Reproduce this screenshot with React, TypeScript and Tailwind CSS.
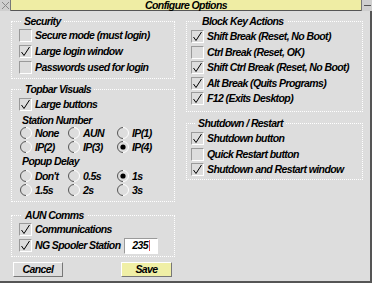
import React from "react";

const FONT = { fontFamily: '"Liberation Sans", Arial, sans-serif' };

function Check({ on }: { on?: boolean }) {
  return (
    <span className="relative w-[13px] h-[13px] shrink-0 border border-t-[#9a9a9a] border-l-[#9a9a9a] border-b-white border-r-white bg-[#dddddd]">
      {on && (
        <svg width="11" height="11" viewBox="0 0 11 11" className="absolute left-0 top-0">
          <path d="M1.5 6 L4 9.5 L9.5 1" fill="none" stroke="#000" strokeWidth="1" />
        </svg>
      )}
    </span>
  );
}

function Radio({ on }: { on?: boolean }) {
  return (
    <svg width="12" height="12" viewBox="0 0 12 12" className="shrink-0">
      <path d="M6 0.5 A5.5 5.5 0 0 0 6 11.5" fill="none" stroke="#555" strokeWidth="1" />
      <path d="M6 0.5 A5.5 5.5 0 0 1 6 11.5" fill="none" stroke="#fff" strokeWidth="1" />
      {on && <circle cx="6" cy="6" r="2.6" fill="#000" />}
    </svg>
  );
}

const TXT = "text-[10.5px] tracking-[-0.6px]";

function CheckRow({ label, on }: { label: string; on?: boolean }) {
  return (
    <div className="flex items-center gap-[3px] h-[13px]">
      <Check on={on} />
      <span className={`${TXT} leading-[13px] whitespace-nowrap`}>{label}</span>
    </div>
  );
}

function RadioItem({ label, on }: { label: string; on?: boolean }) {
  return (
    <div className="flex items-center gap-[3px] h-[14px]">
      <Radio on={on} />
      <span className={`${TXT} leading-[13px] whitespace-nowrap`}>{label}</span>
    </div>
  );
}

function Legend({ children, ml }: { children: React.ReactNode; ml: string }) {
  return (
    <legend className={`${ml} px-[3px] h-[12px] ${TXT} leading-[12px]`}>{children}</legend>
  );
}

export default function App() {
  return (
    <div
      className="w-[372px] h-[283px] bg-[#dddddd] flex flex-col overflow-hidden text-black font-bold italic"
      style={FONT}
    >
      {/* Title bar */}
      <div className="h-[11px] flex border-b border-[#555] shrink-0">
        <div className="w-[11px] h-[11px] bg-[#cfcfcf] border-r border-[#777] flex items-center justify-center">
          <svg width="9" height="9" viewBox="0 0 9 9">
            <path d="M1 1 L8 8 M8 1 L1 8" stroke="#888" strokeWidth="1" />
          </svg>
        </div>
        <div className={`flex-1 bg-[#efeda4] flex items-center justify-center ${TXT} leading-[11px]`}>
          Configure Options
        </div>
        <div className="w-[11px] h-[11px] bg-[#cfcfcf] border-l border-[#777] flex items-center justify-center">
          <div className="w-[7px] h-[1px] bg-[#555]" />
        </div>
      </div>

      {/* Body */}
      <div className="flex-1 flex pl-[11px] pt-[4px] gap-[11px] border-r-2 border-b-2 border-[#555]">
        {/* Left column */}
        <div className="w-[164px] flex flex-col">
          <fieldset className="border border-dotted border-white pl-[7px] pt-[2px] pb-[4px]">
            <Legend ml="ml-[2px]">Security</Legend>
            <div className="flex flex-col gap-[3px]">
              <CheckRow label="Secure mode (must login)" />
              <CheckRow label="Large login window" on />
              <CheckRow label="Passwords used for login" />
            </div>
          </fieldset>

          <fieldset className="mt-[4px] border border-dotted border-white pl-[7px] pt-[3px] pb-[4px]">
            <Legend ml="ml-[3px]">Topbar Visuals</Legend>
            <CheckRow label="Large buttons" on />
            <div className={`mt-[3px] h-[12px] pl-[3px] ${TXT} leading-[12px]`}>Station Number</div>
            <div className="grid grid-cols-[48px_49px_auto] pl-[1px]">
              <RadioItem label="None" />
              <RadioItem label="AUN" />
              <RadioItem label="IP(1)" />
              <RadioItem label="IP(2)" />
              <RadioItem label="IP(3)" />
              <RadioItem label="IP(4)" on />
            </div>
            <div className={`h-[15px] pl-[3px] ${TXT} leading-[15px]`}>Popup Delay</div>
            <div className="grid grid-cols-[48px_49px_auto] pl-[1px]">
              <RadioItem label="Don't" />
              <RadioItem label="0.5s" />
              <RadioItem label="1s" on />
              <RadioItem label="1.5s" />
              <RadioItem label="2s" />
              <RadioItem label="3s" />
            </div>
          </fieldset>

          <fieldset className="mt-[7px] border border-dotted border-white pl-[7px] pt-[2px] pb-[4px]">
            <Legend ml="ml-[3px]">AUN Comms</Legend>
            <div className="flex flex-col gap-[3px]">
              <CheckRow label="Communications" on />
              <div className="flex items-center h-[13px]">
                <div className="w-[105px] shrink-0">
                  <CheckRow label="NG Spooler Station" on />
                </div>
                <div className={`w-[34px] h-[16px] bg-white border border-t-[#9a9a9a] border-l-[#9a9a9a] border-b-white border-r-white flex items-center justify-end pr-[7px] ${TXT} leading-[13px]`}>
                  235
                  <span className="ml-[1px] w-[1px] h-[11px] bg-[#e05050]" />
                </div>
              </div>
            </div>
          </fieldset>

          <div className="mt-[5px] flex pl-[2px]">
            <button className={`w-[50px] h-[15px] bg-[#dddddd] border border-t-white border-l-white border-b-[#777] border-r-[#777] ${TXT} leading-[13px] font-bold italic`}>
              Cancel
            </button>
            <button className={`ml-[58px] w-[51px] h-[15px] bg-[#f0efa6] border border-t-white border-l-white border-b-[#777] border-r-[#777] ${TXT} leading-[13px] font-bold italic`}>
              Save
            </button>
          </div>
        </div>

        {/* Right column */}
        <div className="w-[177px] flex flex-col">
          <fieldset className="border border-dotted border-white pl-[4px] pt-[3px] pb-[6px]">
            <Legend ml="ml-[8px]">Block Key Actions</Legend>
            <div className="flex flex-col gap-[2.5px]">
              <CheckRow label="Shift Break (Reset, No Boot)" on />
              <CheckRow label="Ctrl Break (Reset, OK)" />
              <CheckRow label="Shift Ctrl Break (Reset, No Boot)" on />
              <CheckRow label="Alt Break (Quits Programs)" on />
              <CheckRow label="F12 (Exits Desktop)" on />
            </div>
          </fieldset>

          <fieldset className="mt-[5px] border border-dotted border-white pl-[4px] pt-[3px] pb-[3px]">
            <Legend ml="ml-[4px]">Shutdown / Restart</Legend>
            <div className="flex flex-col gap-[2.5px]">
              <CheckRow label="Shutdown button" on />
              <CheckRow label="Quick Restart button" />
              <CheckRow label="Shutdown and Restart window" on />
            </div>
          </fieldset>
        </div>
      </div>
    </div>
  );
}
